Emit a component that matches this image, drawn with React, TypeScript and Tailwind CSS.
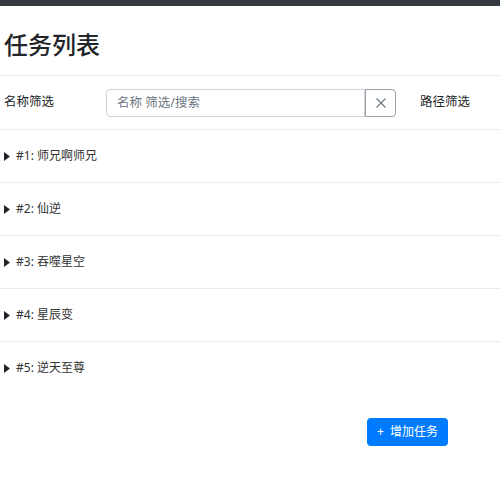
import React, { useState } from 'react';

const tasks = [
  { id: 1, name: '师兄啊师兄' },
  { id: 2, name: '仙逆' },
  { id: 3, name: '吞噬星空' },
  { id: 4, name: '星辰变' },
  { id: 5, name: '逆天至尊' },
];

const font = { fontFamily: '"Noto Sans", "Noto Sans CJK SC", sans-serif' };

export default function App() {
  const [query, setQuery] = useState('');

  return (
    <div className="min-h-[500px] bg-white text-[#212529]" style={font}>
      <div className="h-[6px] bg-[#343a40]" />

      <h3 className="h-[69px] px-[4px] flex items-center text-[24px] font-medium leading-none pt-[8px]">任务列表</h3>

      {/* 筛选栏 */}
      <div className="flex items-center h-[54px] px-[4px] border-t border-[#e9ecef] text-[12.5px]">
        <div className="w-[102px]">名称筛选</div>
        <div className="flex h-[28px]">
          <input
            value={query}
            onChange={(e) => setQuery(e.target.value)}
            placeholder="名称 筛选/搜索"
            className="w-[259px] h-[28px] px-[10px] border border-[#ced4da] rounded-l-[4px] text-[12.5px] placeholder-[#6c757d] outline-none"
          />
          <button className="w-[31px] h-[28px] border border-[#9aa0a6] rounded-r-[4px] flex items-center justify-center text-[#6c757d]">
            <svg className="w-[12px] h-[12px]" viewBox="0 0 12 12" fill="none" stroke="currentColor" strokeWidth={1.1}>
              <path d="M1.5 1.5l9 9M10.5 1.5l-9 9" />
            </svg>
          </button>
        </div>
        <div className="ml-[24px]">路径筛选</div>
      </div>

      {tasks.map((t) => (
        <div
          key={t.id}
          className="flex items-center h-[53px] px-[4px] text-[12px] text-[#333] border-t border-[#e9ecef]"
        >
          <svg className="w-[6px] h-[9px] mr-[6px] text-[#212529]" viewBox="0 0 6 9" fill="currentColor">
            <path d="M0 0L6 4.5L0 9Z" />
          </svg>
          <span>#{t.id}: {t.name}</span>
        </div>
      ))}

      <div className="flex justify-end pr-[52px] pt-[24px]">
        <button className="h-[28px] px-[10px] bg-[#007bff] text-white rounded-[4px] text-[12px] flex items-center gap-[6px]">
          <span>+</span>
          <span>增加任务</span>
        </button>
      </div>
    </div>
  );
}
